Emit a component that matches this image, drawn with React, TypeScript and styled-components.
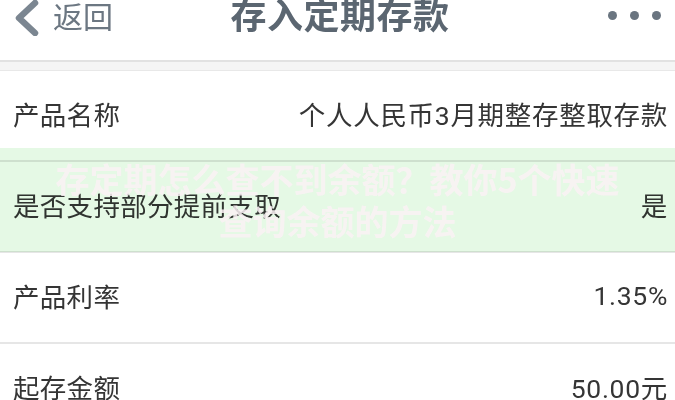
import React from 'react'
import styled, { createGlobalStyle } from 'styled-components'

const GlobalStyle = createGlobalStyle`
    html, body {
        margin: 0;
        padding: 0;
        background: #ffffff;
    }
    body {
        font-family: "Roboto", "Noto Sans CJK SC", "Noto Sans", sans-serif;
        overflow: hidden;
    }
`

const Page = styled.div`
    position: relative;
    width: 675px;
    height: 400px;
    overflow: hidden;
    background: #ffffff;
`

const Header = styled.div`
    display: grid;
    grid-template-columns: 1fr auto 1fr;
    align-items: start;
    height: 60px;
    padding: 0 14px 0 11px;
    box-sizing: border-box;
    background: #ffffff;
`

const Back = styled.div`
    display: flex;
    align-items: center;
    gap: 12px;
    color: #6c7782;
    font-size: 30px;
    line-height: 34px;
`

const Title = styled.div`
    color: #5b6671;
    font-size: 36px;
    font-weight: 700;
    line-height: 34px;
    letter-spacing: 0.5px;
    margin-left: 8px;
`

const More = styled.div`
    display: flex;
    justify-content: flex-end;
    gap: 13px;
    padding-top: 11px;
`

const Dot = styled.span`
    width: 9px;
    height: 9px;
    border-radius: 50%;
    background: #6a7580;
`

const Gap = styled.div`
    height: 8px;
    background: #f5f5f5;
    border-top: 2px solid #e2e2e2;
    border-bottom: 1px solid #e8e8e8;
`

const List = styled.div`
    display: flex;
    flex-direction: column;
`

const Row = styled.div`
    display: flex;
    align-items: center;
    justify-content: space-between;
    padding: 0 7px 5px 13px;
    box-sizing: border-box;
    height: 91px;
    border-bottom: 2px solid #e6e6e6;
    color: #353535;
    font-size: 26.5px;
`

const Label = styled.span`
    letter-spacing: 0.3px;
`

const Value = styled.span`
    letter-spacing: 0.7px;
`

const Band = styled.div`
    position: absolute;
    left: 0;
    right: 0;
    top: 148px;
    height: 104px;
    background: #e5f9e5;
    mix-blend-mode: multiply;
    pointer-events: none;
`

const Watermark = styled.div`
    position: absolute;
    left: 0;
    right: 0;
    top: 158px;
    text-align: center;
    color: rgba(250, 242, 244, 0.85);
    font-family: "Noto Sans CJK SC", sans-serif;
    font-size: 34px;
    font-weight: 700;
    line-height: 42px;
    pointer-events: none;
`

const rows = [
    { label: '产品名称', value: '个人人民币3月期整存整取存款' },
    { label: '是否支持部分提前支取', value: '是' },
    { label: '产品利率', value: '1.35%' },
    { label: '起存金额', value: '50.00元' },
]

const App: React.FC = () => {
    return (
        <Page>
            <GlobalStyle />
            <Header>
                <Back>
                    <svg width="30" height="36" viewBox="0 0 30 36">
                        <path d="M24 3 L8 18 L24 33" fill="none" stroke="#7b8691" strokeWidth="6.5" strokeLinecap="round" strokeLinejoin="round" />
                    </svg>
                    <span>返回</span>
                </Back>
                <Title>存入定期存款</Title>
                <More>
                    <Dot />
                    <Dot />
                    <Dot />
                </More>
            </Header>
            <Gap />
            <List>
                {rows.map(r => (
                    <Row key={r.label}>
                        <Label>{r.label}</Label>
                        <Value>{r.value}</Value>
                    </Row>
                ))}
            </List>
            <Band />
            <Watermark>
                存定期怎么查不到余额？教你5个快速
                <br />
                查询余额的方法
            </Watermark>
        </Page>
    )
}

export default App
